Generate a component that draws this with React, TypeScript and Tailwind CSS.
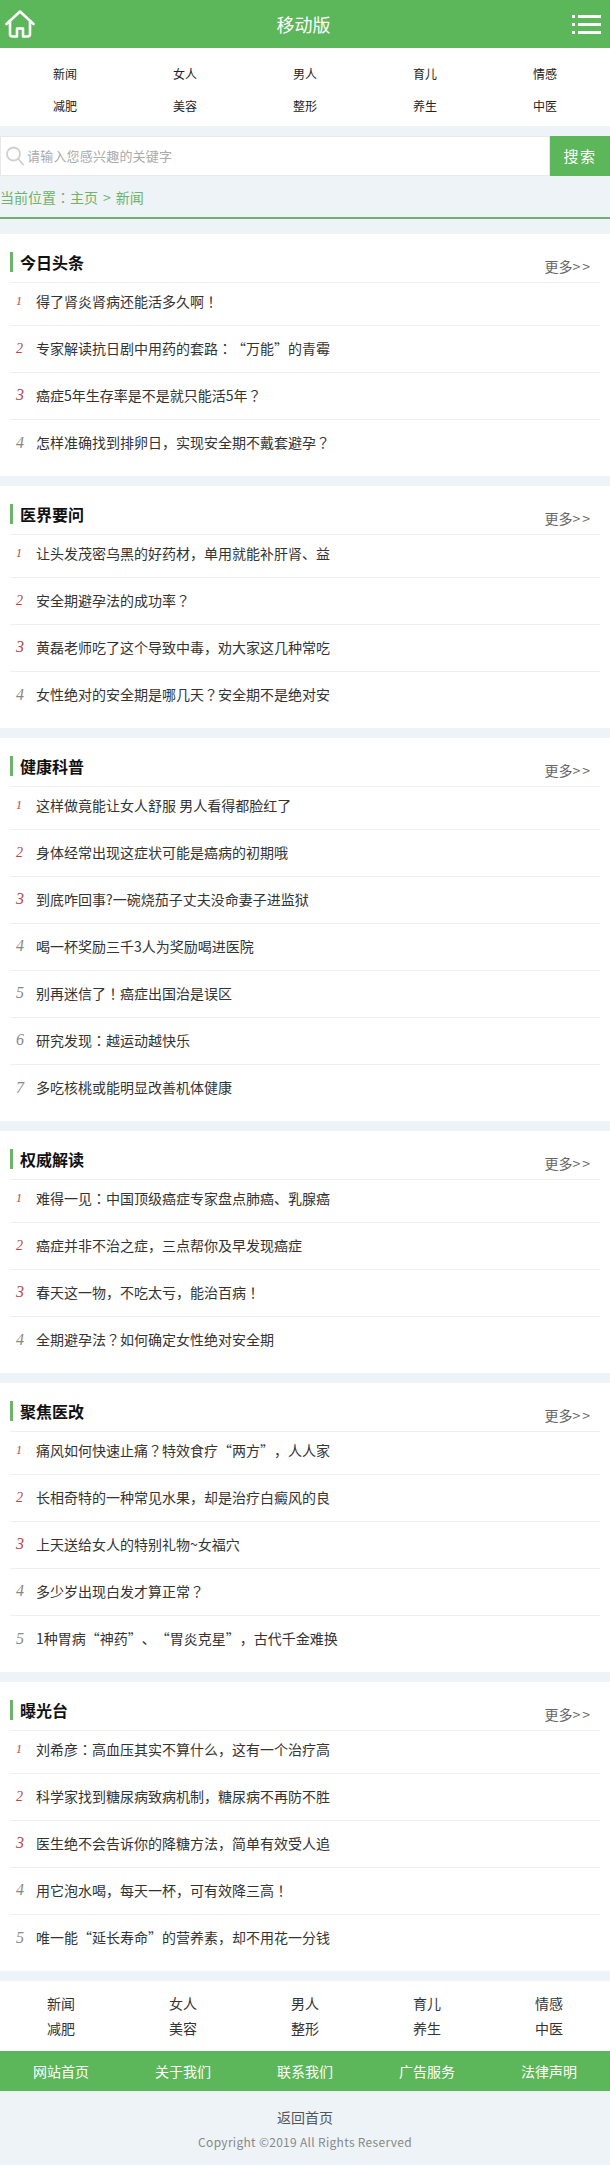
const navItems = ["新闻", "女人", "男人", "育儿", "情感", "减肥", "美容", "整形", "养生", "中医"];
const footerLinks = ["网站首页", "关于我们", "联系我们", "广告服务", "法律声明"];

const SECTIONS = [
  {
    title: "今日头条",
    items: ["得了肾炎肾病还能活多久啊！", "专家解读抗日剧中用药的套路：“万能”的青霉", "癌症5年生存率是不是就只能活5年？", "怎样准确找到排卵日，实现安全期不戴套避孕？"],
  },
  {
    title: "医界要问",
    items: ["让头发茂密乌黑的好药材，单用就能补肝肾、益", "安全期避孕法的成功率？", "黄磊老师吃了这个导致中毒，劝大家这几种常吃", "女性绝对的安全期是哪几天？安全期不是绝对安"],
  },
  {
    title: "健康科普",
    items: ["这样做竟能让女人舒服 男人看得都脸红了", "身体经常出现这症状可能是癌病的初期哦", "到底咋回事?一碗烧茄子丈夫没命妻子进监狱", "喝一杯奖励三千3人为奖励喝进医院", "别再迷信了！癌症出国治是误区", "研究发现：越运动越快乐", "多吃核桃或能明显改善机体健康"],
  },
  {
    title: "权威解读",
    items: ["难得一见：中国顶级癌症专家盘点肺癌、乳腺癌", "癌症并非不治之症，三点帮你及早发现癌症", "春天这一物，不吃太亏，能治百病！", "全期避孕法？如何确定女性绝对安全期"],
  },
  {
    title: "聚焦医改",
    items: ["痛风如何快速止痛？特效食疗“两方”，人人家", "长相奇特的一种常见水果，却是治疗白癜风的良", "上天送给女人的特别礼物~女福穴", "多少岁出现白发才算正常？", "1种胃病“神药”、“胃炎克星”，古代千金难换"],
  },
  {
    title: "曝光台",
    items: ["刘希彦：高血压其实不算什么，这有一个治疗高", "科学家找到糖尿病致病机制，糖尿病不再防不胜", "医生绝不会告诉你的降糖方法，简单有效受人追", "用它泡水喝，每天一杯，可有效降三高！", "唯一能“延长寿命”的营养素，却不用花一分钱"],
  },
];

function rankClass(n: number) {
  if (n === 1) return "text-[12px] text-[#b5474a]";
  if (n === 2) return "text-[14px] text-[#b5474a]";
  if (n === 3) return "text-[16px] text-[#b5474a]";
  return "text-[16px] text-[#888888]";
}

// full-width punctuation sits centred in its cell in the reference, the KR cut does that
function Punct({ text }: { text: string }) {
  return (
    <>
      {text.split(/([，！？：])/).map((part, i) =>
        i % 2 === 1 ? (
          <span key={i} className="font-['Noto_Sans_CJK_KR',sans-serif]">{part}</span>
        ) : (
          part
        ),
      )}
    </>
  );
}

function NewsSection({ title, items }: { title: string; items: string[] }) {
  return (
    <section className="bg-white px-[10px] pb-[9px]">
      <div className="flex h-[49px] items-end border-b border-[#eeeeee] pb-[10px]">
        <h2 className="h-[20px] flex-1 border-l-[3px] border-[#6db36a] pl-[7px] text-[16px] leading-[20px] font-bold text-[#111111]">
          {title}
        </h2>
        <a className="mr-[8px] -mb-[3px] text-[14px] leading-[18px] text-[#666666]">
          更多<span className="tracking-[2px]">&gt;&gt;</span>
        </a>
      </div>
      <ul className="-mt-[4px]">
        {items.map((item, i) => (
          <li key={item} className="flex h-[47px] items-center border-b border-[#eeeeee] pb-[2px] last:border-b-0">
            <span className={`w-[26px] pl-[6px] font-['Liberation_Serif',serif] italic ${rankClass(i + 1)}`}>{i + 1}</span>
            <span className="text-[14px] text-[#333333] [text-spacing-trim:space-all]">
              <Punct text={item} />
            </span>
          </li>
        ))}
      </ul>
    </section>
  );
}

export default function App() {
  return (
    <div className="min-h-[2165px] bg-[#eef3f7] font-['Noto_Sans_CJK_SC','Noto_Sans',sans-serif]">
      {/* top bar */}
      <header className="flex h-[48px] items-center justify-between bg-[#5cb65a] pr-[8px] pl-[5px]">
        <svg width="30" height="28" viewBox="0 0 30 28" fill="none" stroke="#ffffff" strokeWidth="2.6" strokeLinejoin="round" strokeLinecap="round">
          <path d="M1.5 14 15 1.5 28.5 14" />
          <path d="M5 11v13a2.5 2.5 0 0 0 2.5 2.5h4.500V18.500h6V26.500h4.500A2.500 2.500 0 0 0 25 24V11" />
        </svg>
        <span className="text-[18px] text-white">移动版</span>
        <svg width="30" height="22" viewBox="0 0 30 22" fill="#ffffff">
          <rect x="0" y="2" width="3" height="3" />
          <rect x="6" y="2" width="23" height="3" />
          <rect x="0" y="10" width="3" height="3" />
          <rect x="6" y="10" width="23" height="3" />
          <rect x="0" y="18" width="3" height="3" />
          <rect x="6" y="18" width="23" height="3" />
        </svg>
      </header>

      {/* channel nav */}
      <nav className="grid h-[78px] grid-cols-5 content-start bg-white px-[5px] pt-[10px]">
        {navItems.map((name) => (
          <a key={name} className="text-center text-[12px] leading-[32px] text-[#222222]">{name}</a>
        ))}
      </nav>

      {/* search */}
      <div className="mt-[10px] flex h-[40px]">
        <div className="flex flex-1 items-center gap-[3px] border border-[#e8e8e8] bg-white pl-[5px]">
          <svg width="18" height="20" viewBox="0 0 18 20" fill="none" stroke="#cfcfcf" strokeWidth="1.8" strokeLinecap="round">
            <circle cx="7.500" cy="8" r="6.500" />
            <path d="M12.500 13 17 18.500" />
          </svg>
          <span className="text-[13px] tracking-[0.2px] text-[#aaaaaa]">请输入您感兴趣的关键字</span>
        </div>
        <button className="w-[60px] bg-[#5cb65a] pt-[1px] text-[15px] tracking-[1.5px] text-white">搜索</button>
      </div>

      {/* breadcrumb */}
      <div className="h-[43px] border-b-2 border-[#6fae6d] pt-[10px] text-[14px] leading-[22px] text-[#6db36a]">
        <Punct text="当前位置：主页" /><span className="mx-[5px]">&gt;</span>新闻
      </div>

      <div className="mt-[15px] flex flex-col gap-[10px]">
        {SECTIONS.map((s) => (
          <NewsSection key={s.title} title={s.title} items={s.items} />
        ))}
      </div>

      {/* bottom nav */}
      <nav className="mt-[10px] grid h-[70px] grid-cols-5 content-start bg-white pt-[10px]">
        {navItems.map((name) => (
          <a key={name} className="text-center text-[14px] leading-[25px] text-[#333333]">{name}</a>
        ))}
      </nav>
      <div className="grid h-[40px] grid-cols-5 items-center bg-[#5cb65a]">
        {footerLinks.map((name) => (
          <a key={name} className="text-center text-[14px] text-white">{name}</a>
        ))}
      </div>

      <footer className="pt-[14px] text-center">
        <p className="text-[14px] leading-[24px] text-[#555555]">返回首页</p>
        <p className="text-[12px] leading-[26px] tracking-[0.3px] text-[#888888]">Copyright ©2019 All Rights Reserved</p>
      </footer>
    </div>
  );
}
